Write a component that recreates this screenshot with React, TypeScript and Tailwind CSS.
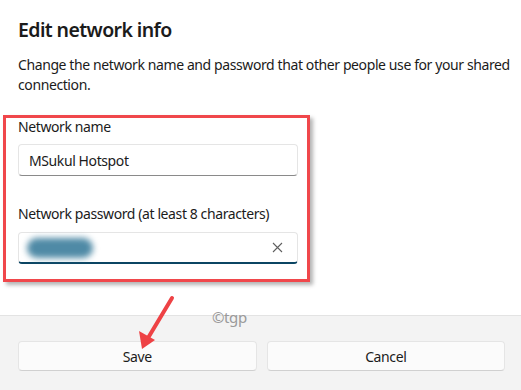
import React from 'react';

const font = { fontFamily: '"Noto Sans", "Open Sans", sans-serif' };

export default function App() {
  return (
    <div className="relative w-[521px] h-[390px] overflow-hidden bg-white text-[#1b1b1b] tracking-[-0.4px]" style={font}>
      <div className="h-[315px] pl-[18px] pt-4">
        <h1 className="text-[19.5px] leading-[28px] font-semibold tracking-[-0.6px]">Edit network info</h1>
        <p className="mt-[11px] text-[14px] leading-5 whitespace-nowrap">
          Change the network name and password that other people use for your shared
          <br />
          connection.
        </p>

        {/* red annotation box */}
        <div className="mt-5 -ml-[15px] w-[307px] border-[3px] border-[#f0474b] shadow-[3px_3px_4px_rgba(0,0,0,0.3)] pl-3 pr-[9px] pb-[15px]">
          <div className="text-[14px] leading-[18px]">Network name</div>
          <div className="mt-2 h-8 rounded-[4px] border border-[#e5e5e5] border-b-[#8a8a8a] bg-white flex items-center px-[10px] text-[14px]">
            MSukul Hotspot
          </div>

          <div className="mt-[29px] text-[14px] leading-[18px]">Network password (at least 8 characters)</div>
          <div className="mt-[9px] h-8 rounded-[4px] border border-[#e5e5e5] border-b-2 border-b-[#0b4563] bg-white flex items-center pl-[8px] pr-[14px]">
            <div className="w-[66px] h-[20px] rounded-full bg-[#4f8aa6] blur-[3px]" />
            <div className="flex-1" />
            <svg width="11" height="11" viewBox="0 0 11 11" className="shrink-0">
              <path d="M1 1L10 10M10 1L1 10" stroke="#5f5f5f" strokeWidth="1.1" />
            </svg>
          </div>
        </div>
      </div>

      <div className="h-[75px] border-t border-[#e3e3e3] bg-[#f3f3f3] pt-[25px] pl-[18px] pr-4 flex gap-[10px]">
        <button className="flex-1 h-[30px] rounded-[4px] border border-[#e5e5e5] border-b-[#d0d0d0] bg-[#fbfbfb] text-[14px]">
          Save
        </button>
        <button className="flex-1 h-[30px] rounded-[4px] border border-[#e5e5e5] border-b-[#d0d0d0] bg-[#fbfbfb] text-[14px]">
          Cancel
        </button>
      </div>

      {/* watermark */}
      <div className="absolute left-[212px] top-[306px] text-[15px] text-[#9a9a9a]">©tgp</div>

      {/* arrow annotation */}
      <svg className="absolute left-0 top-0 pointer-events-none" width="521" height="390">
        <line x1="172" y1="298" x2="148" y2="338" stroke="#ee4245" strokeWidth="4" strokeLinecap="round" />
        <polygon points="142,349 139,331 155,340" fill="#ee4245" />
      </svg>
    </div>
  );
}
